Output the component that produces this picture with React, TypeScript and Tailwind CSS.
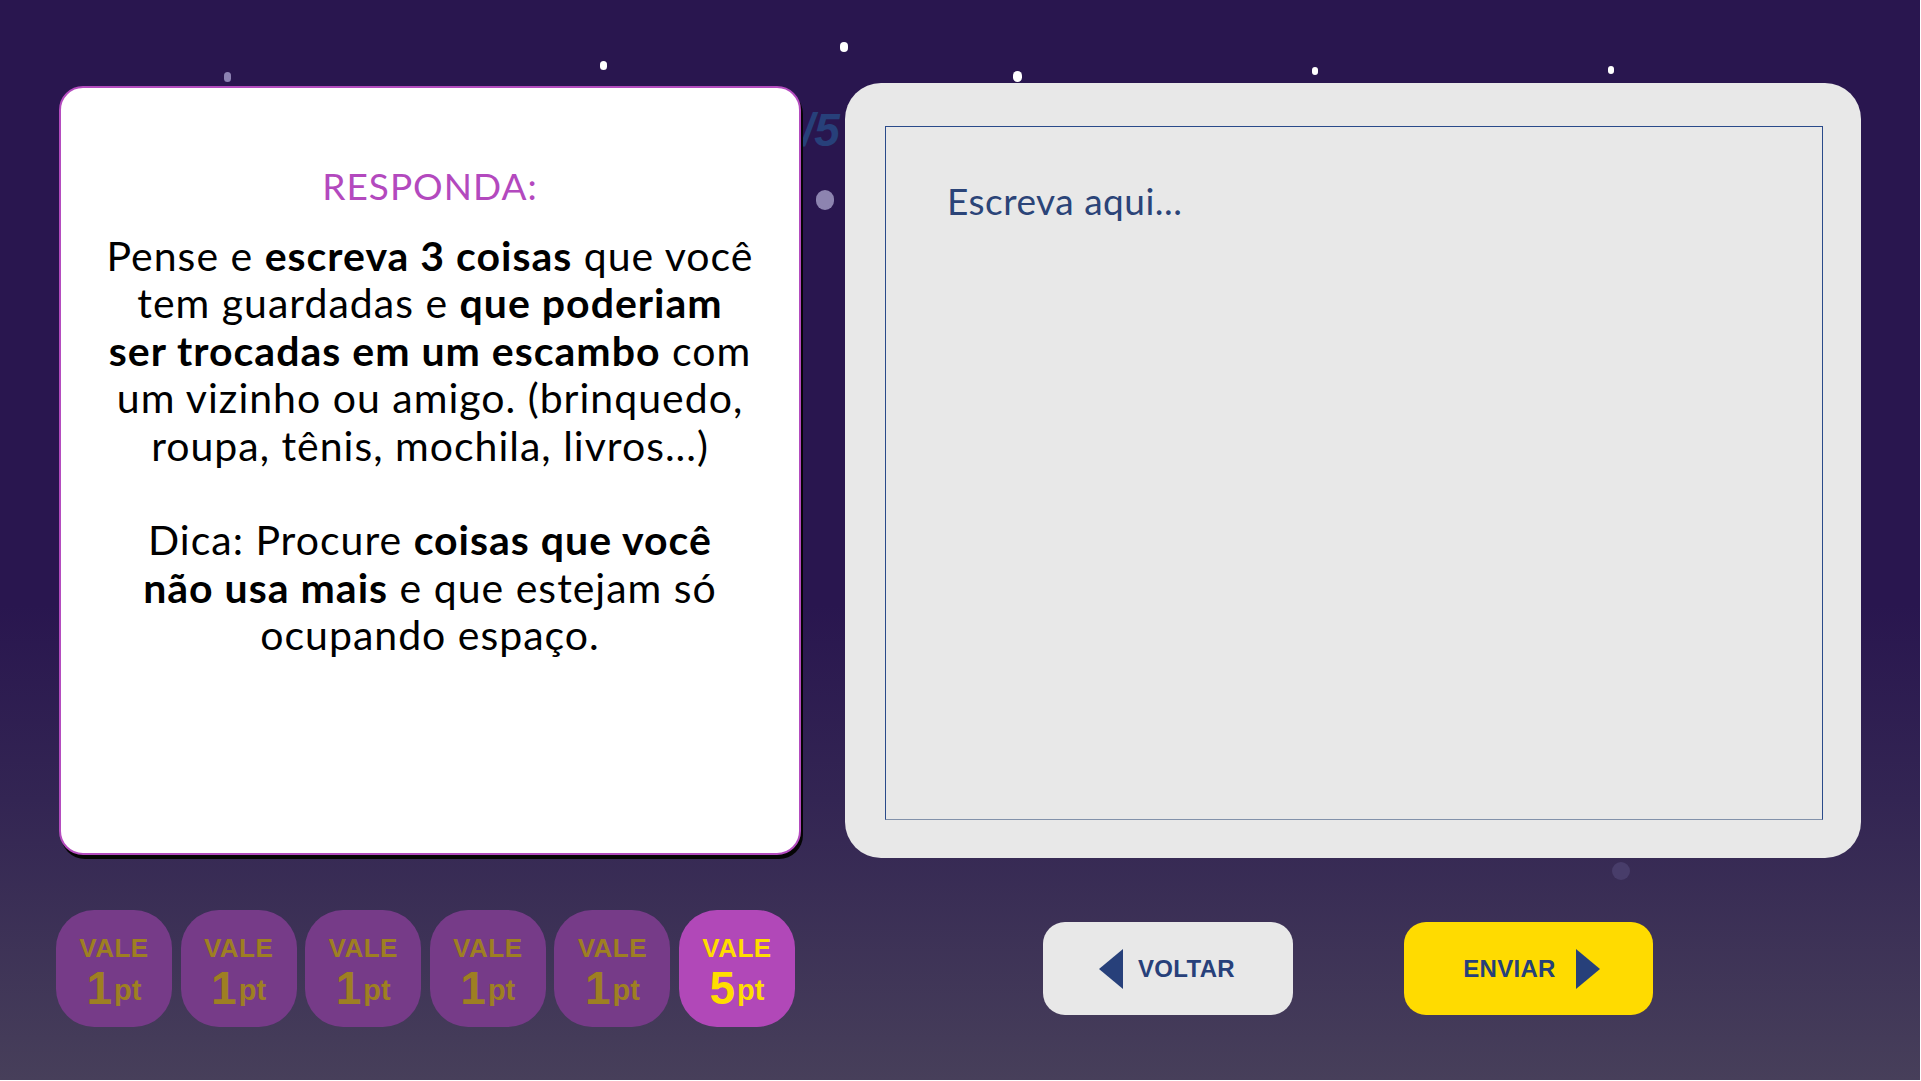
import React from "react";

const font = "font-['Lato','Open_Sans',sans-serif]";

const stars = [
  { x: 224, y: 72, cls: "w-[7px] h-[10px] bg-[#8c82b2]" },
  { x: 600, y: 61, cls: "w-[7px] h-[9px] bg-white" },
  { x: 840, y: 42, cls: "w-[8px] h-[10px] bg-white" },
  { x: 1013, y: 71, cls: "w-[9px] h-[11px] bg-white" },
  { x: 1312, y: 67, cls: "w-[6px] h-[8px] bg-white" },
  { x: 1608, y: 66, cls: "w-[6px] h-[8px] bg-white" },
  { x: 816, y: 190, cls: "w-[18px] h-[20px] bg-[#8d84b0]" },
  { x: 1612, y: 862, cls: "w-[18px] h-[18px] bg-[#483d6a]" },
];

function Badge({ value, active }: { value: number; active?: boolean }) {
  return (
    <div
      className={
        active
          ? "w-[116px] h-[117px] rounded-[38px] bg-[#b148b8] text-[#ffdc00] flex flex-col items-center justify-center pt-[8px]"
          : "w-[116px] h-[117px] rounded-[38px] bg-[#763b88] text-[#9e7f22] flex flex-col items-center justify-center pt-[8px]"
      }
    >
      <span className="font-['Liberation_Sans',sans-serif] font-bold text-[26px] leading-[30px] tracking-[0.5px]">VALE</span>
      <span className="flex items-center font-['Liberation_Sans',sans-serif] font-bold h-[50px]">
        <span className="text-[46px] leading-[50px]">{value}</span>
        <span className="text-[29px] leading-[34px] ml-[2px] pt-[4px]">pt</span>
      </span>
    </div>
  );
}

export default function App() {
  return (
    <div
      className={`relative w-[1920px] h-[1080px] overflow-hidden bg-[linear-gradient(180deg,#29164f_0%,#29164f_56%,#332553_74%,#473f5a_100%)] ${font}`}
    >
      {stars.map((s, i) => (
        <div
          key={i}
          className={`absolute rounded-full ${s.cls}`}
          style={{ left: s.x, top: s.y }}
        />
      ))}

      <div className="relative pt-[83px] pl-[59px] grid grid-cols-[742px_1016px] gap-x-[44px] gap-y-[52px]">
        {/* question card */}
        <div className="relative self-center">
          <span className="absolute left-[717px] top-[10px] font-['Liberation_Sans',sans-serif] font-bold italic text-[46px] text-[#27407a] z-0">
            1/5
          </span>
          <div className="relative z-10 h-[769px] bg-white rounded-[24px] border-2 border-[#b44cbf] shadow-[2px_4px_0_#050505] flex flex-col items-center pt-[76px]">
            <h2 className="text-[#b349be] text-[37px] leading-[43px] tracking-[1px]">RESPONDA:</h2>
            <p className="mt-[25px] text-black text-[41px] leading-[47.4px] tracking-[1px] text-center whitespace-nowrap">
              Pense e <b className="font-bold">escreva 3 coisas</b> que você
              <br />
              tem guardadas e <b className="font-bold">que poderiam</b>
              <br />
              <b className="font-bold">ser trocadas em um escambo</b> com
              <br />
              um vizinho ou amigo. (brinquedo,
              <br />
              roupa, tênis, mochila, livros...)
              <br />
              <br />
              Dica: Procure <b className="font-bold">coisas que você</b>
              <br />
              <b className="font-bold">não usa mais</b> e que estejam só
              <br />
              ocupando espaço.
            </p>
          </div>
        </div>

        {/* answer panel */}
        <div className="h-[775px] bg-[#e8e8e8] rounded-[36px] p-[40px] pt-[43px] pb-[38px] pr-[38px] flex">
          <textarea
            className="flex-1 resize-none bg-transparent border-[1.5px] border-[#2a4a8a] border-b-[#8291aa] outline-none pl-[61px] pt-[46px] text-[37px] tracking-[0.5px] text-[#2b4478] placeholder:text-[#2b4478]"
            placeholder="Escreva aqui..."
          />
        </div>

        {/* points */}
        <div className="flex items-center gap-[8.6px] -ml-[3px]">
          <Badge value={1} />
          <Badge value={1} />
          <Badge value={1} />
          <Badge value={1} />
          <Badge value={1} />
          <Badge value={5} active />
        </div>

        {/* buttons */}
        <div className="flex items-center pl-[198px] gap-[111px]">
          <button className="w-[250px] h-[93px] rounded-[22px] bg-[#e8e8e8] flex items-center justify-center gap-[15px] pr-[2px]">
            <svg width="24" height="40" viewBox="0 0 24 40">
              <path d="M24 0 L0 20 L24 40 Z" fill="#27407a" />
            </svg>
            <span className="font-['Liberation_Sans',sans-serif] font-bold text-[24px] text-[#27407a] tracking-[0.3px]">VOLTAR</span>
          </button>
          <button className="w-[249px] h-[93px] rounded-[22px] bg-[#ffdb00] flex items-center justify-center gap-[20px] pl-[6px]">
            <span className="font-['Liberation_Sans',sans-serif] font-bold text-[24px] text-[#27407a] tracking-[0.3px]">ENVIAR</span>
            <svg width="24" height="40" viewBox="0 0 24 40">
              <path d="M0 0 L24 20 L0 40 Z" fill="#27407a" />
            </svg>
          </button>
        </div>
      </div>
    </div>
  );
}
